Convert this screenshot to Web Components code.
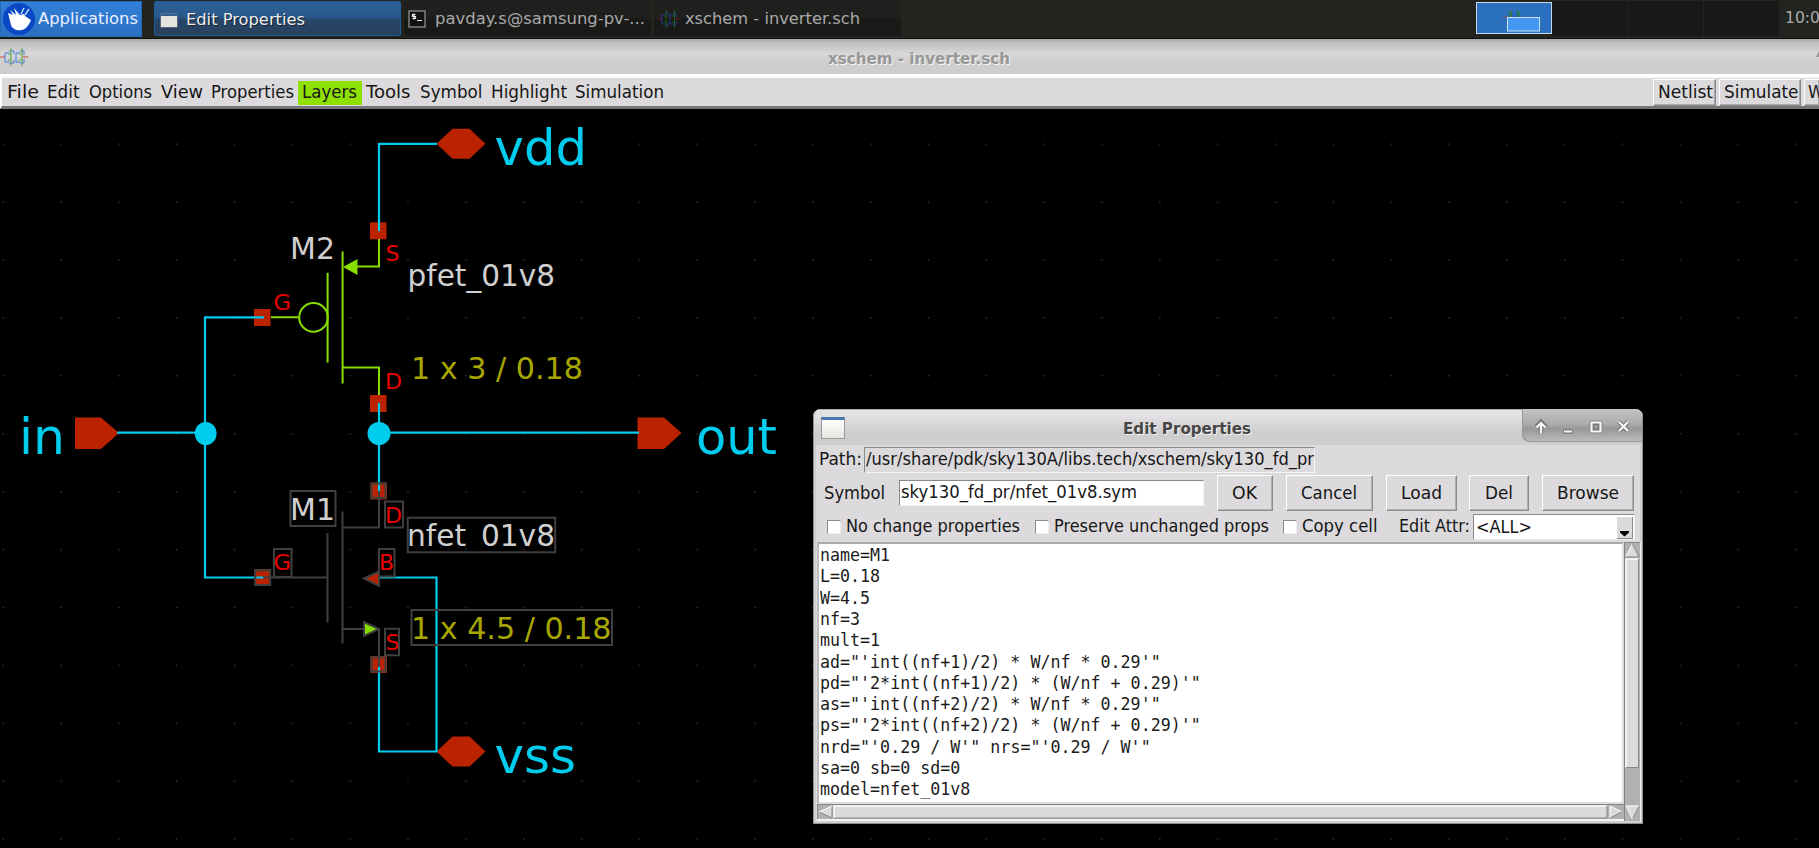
<!DOCTYPE html>
<html lang="en">
<head>
<meta charset="utf-8">
<title>xschem - inverter.sch</title>
<style>
html,body{margin:0;background:#000;overflow:hidden}
body{width:1819px;height:848px;font-family:"DejaVu Sans",sans-serif}
</style>
</head>
<body>
<desk-top></desk-top>
<script>
const define=(name,html,init)=>customElements.define(name,class extends HTMLElement{
  constructor(){super();this.attachShadow({mode:'open'}).innerHTML=html}
  connectedCallback(){if(init)init(this,this.shadowRoot)}
});

/* Text set to an exact advance width. Attributes: gap (space before), w (width). */
customElements.define('fit-text',class extends HTMLElement{
  constructor(){super();this.attachShadow({mode:'open'}).innerHTML=`<style>
    :host{display:block;flex:none;white-space:pre}span{display:inline-block;transform-origin:0 50%}
    </style><span><slot></slot></span>`}
  connectedCallback(){
    const w=+this.getAttribute('w'),s=this.shadowRoot.querySelector('span');
    this.style.marginLeft=(this.getAttribute('gap')||0)+'px';
    this.style.width=w+'px';
    requestAnimationFrame(()=>this.fit(w,s));this.fit(w,s);
  }
  fit(w,s){s.style.transform='none';const n=s.getBoundingClientRect().width;if(n)s.style.transform=`scaleX(${w/n})`}
});

const gates=(r,g,b)=>`<path d="M0 10h5M23 10h5" stroke="${r}"/><path d="M5 10V6h4M5 10v5h4M16 10V6h4M16 10v5h4M9 4h5v3M9 16h5v-3M20 4h4v4M20 16h4v-4" stroke="${b}"/><path d="M11 1v18M22 1v18M8 7h3M8 13h3M19 7h3M19 13h3" stroke="${g}"/>`;

define('task-bar',`<style>
:host{display:flex;flex:none;height:39px;background:#222420;border-bottom:1px solid #111;box-sizing:border-box;color:#a9a9a9;font-size:16.2px;line-height:36px}
.app{display:flex;flex:none;width:142px;height:36px;margin:1px 0 0;background:linear-gradient(#3080d8,#2a70c2);color:#eef;box-shadow:inset 0 0 0 1px #2468b8;line-height:35px}
.app svg{flex:none;margin:1px 0 0 2px}
.task{display:flex;flex:none;height:35px;margin-top:1px}
.on{width:245px;margin-left:12px;background:linear-gradient(#2a6097 0,#2a5788 49%,#28476a 51%,#29405d);border:1px solid #205b99;border-radius:2px;color:#eee;height:33px;text-shadow:1px 1px #123}
.win{width:16px;height:11px;margin:12px 0 0 6px;background:#e4e4df;border-top:2px solid #2c6097;box-shadow:0 0 0 .5px #888}
.off{background:linear-gradient(#1f201e 48%,#191a18 52%);margin-left:3px}
.pager{display:flex;flex:none;height:35px;margin:1px 0 0 575px}
.cell{width:75px;margin-right:1px;background:#181818}
.cell.a{box-sizing:border-box;height:32px;width:76px;margin:1px 0 0;border:1px solid #c9d6e8;background:#2a70be}
</style>
<div class="app"><svg width="34" height="34" viewBox="0 0 34 34"><circle cx="17" cy="17" r="16" fill="#0b46c5"/><path d="M6 11l5 2-3-5 6 5-2-7 6 7 4-1 1 2 6 4c-2 5-5 9-9 10-5 1-10-1-11-5C8 19 7 15 6 11z" fill="#fff"/><path d="M19 12l3-6M23 13l4-6" stroke="#b9ddff" stroke-width="1.4"/></svg><fit-text gap="1.5" w="100">Applications</fit-text></div>
<div class="task on"><div class="win"></div><fit-text gap="9" w="119">Edit Properties</fit-text></div>
<div class="task off" style="width:247px"><svg width="18" height="18" viewBox="0 0 18 18" style="margin:9px 0 0 4px"><rect x="1" y="1" width="16" height="16" fill="#111" stroke="#999" stroke-width="1.2"/><path d="M7.5 4.5h-3v2h3v2h-3M6 3.5v6M9 10.500h5" stroke="#eee" stroke-width="1.2" fill="none"/></svg><fit-text gap="8.5" w="210">pavday.s@samsung-pv-...</fit-text></div>
<div class="task off" style="width:247px"><svg width="21" height="20" viewBox="0 0 28 20" preserveAspectRatio="none" fill="none" style="margin:8px 0 0 4px;opacity:.9">${gates('#8b1818','#207020','#2040a8')}</svg><fit-text gap="6" w="175">xschem - inverter.sch</fit-text></div>
<div class="pager"><div class="cell a"><svg width="74" height="30"><path d="M26 14h5M34 7v7M41 7v7" stroke="#855" /><path d="M33 8v6M41 8v6M32 11h4M39 11h4" stroke="#287b50" stroke-width="2"/><path d="M36 10v4h3v-4" stroke="#2350d8" fill="none"/><rect x="30.500" y="14.500" width="32" height="13.500" fill="#4497f2" stroke="#cfe0f5"/></svg></div><div class="cell"></div><div class="cell"></div><div class="cell"></div></div>
<fit-text gap="4.5" w="35">10:0</fit-text>`);

define('title-bar',`<style>
:host{display:flex;flex:none;height:37px;background:linear-gradient(#a9a9a9 0,#bcbcbc 8%,#d7d7d7 38%,#cecece 65%,#cdcdcd 94%,#fff 96%);color:#979797;font:bold 15.8px/39px "DejaVu Sans",sans-serif;text-shadow:1px 1px #f5f5f5}
svg{flex:none;margin-top:8px}
</style><svg width="28" height="20" fill="none">${gates('#d04040','#5aa445','#4b7be0')}</svg>
<fit-text gap="799.5" w="182">xschem - inverter.sch</fit-text><svg width="4" height="20" style="margin-left:805.5px"><path d="M1 10l3-6v6z" fill="#999"/></svg>`);

define('menu-bar',`<style>
:host{display:flex;flex:none;height:33px;box-sizing:border-box;background:#dcdadc;border-bottom:3px solid #757878;border-top:2px solid #fafafa;border-left:2px solid #fff;color:#161616;font-size:17.3px;line-height:28px;width:1819px;overflow:hidden}
.on{background:#8ee000;height:24px;margin:3px 0 0 4px;width:64px;line-height:22px}
.btn{box-sizing:border-box;height:27px;margin:1px 3px 0 0;border:1px solid;border-color:#fff #8a8a8a #8a8a8a #fff;box-shadow:inset -1px -1px #aaa;line-height:24px;flex:none}
.sp{flex:1}
</style>
<fit-text gap="4.5" w="32">File</fit-text><fit-text gap="8.5" w="32.5">Edit</fit-text><fit-text gap="9" w="63">Options</fit-text><fit-text gap="9" w="42">View</fit-text><fit-text gap="8.500" w="83">Properties</fit-text><div class="on"><fit-text gap="4" w="55">Layers</fit-text></div><fit-text gap="4" w="44.500">Tools</fit-text><fit-text gap="9" w="62.500">Symbol</fit-text><fit-text gap="9" w="76">Highlight</fit-text><fit-text gap="8" w="89">Simulation</fit-text>
<div class="sp"></div>
<div class="btn" style="width:63px"><fit-text gap="3.5" w="55">Netlist</fit-text></div><div class="btn" style="width:82px"><fit-text gap="3.5" w="74.500">Simulate</fit-text></div><div class="btn" style="width:15px;margin:1px 0 0;border-right:0;overflow:hidden"><fit-text gap="3" w="16">W</fit-text></div>`);

const T=(x,y,w,s,c,t)=>`<text x="${x}" y="${y}" font-size="${s}" textLength="${w}" lengthAdjust="spacingAndGlyphs" fill="${c}">${t}</text>`;
const W='#d0d0d0',C='#00ccee',Y='#a7a700',R='#ee0000',P='#bb2200',G='#88dd00',S='#3f3f3f';
const box=(x,y,w,h)=>`<rect x="${x}" y="${y}" width="${w}" height="${h}" fill="none" stroke="${S}" stroke-width="2"/>`;
const sq=(x,y)=>`<rect x="${x}" y="${y}" width="16.500" height="17" fill="${P}"/>`;
const hex=y=>`<path d="M436.500 ${y}L452.500 ${y-15}H469.500L485.500 ${y}L469.500 ${y+15}H452.500Z" fill="${P}"/>`;
define('schematic-canvas',`<style>:host{display:block;flex:1;min-height:0;background:#000}svg{display:block;font-family:"DejaVu Sans",sans-serif}</style>
<svg width="1819" height="739" viewBox="0 109 1819 739">
<defs><pattern id="g" x="2.500" y="143.500" width="57.830" height="57.900" patternUnits="userSpaceOnUse"><rect width="1.400" height="1.400" fill="#3a3a3a"/></pattern></defs>
<rect y="109" width="1819" height="739" fill="url(#g)"/>
${sq(370,222.3)}${sq(254,309)}${sq(370,395)}${sq(370.5,482.500)}${sq(254.500,569)}${sq(370.5,656)}
${hex(143.800)}${hex(751.500)}
<path d="M75 417.500H101L119 433L101 449H75ZM637.500 417.500H664L681.500 433L664 449H637.500Z" fill="${P}"/>
<g fill="none" stroke="${G}" stroke-width="2"><path d="M379 239V266.500H357M342.600 251.500V383.500M327.600 272.700V362.500M271 317.300H299M342.600 367.500H379V395"/><circle cx="313.500" cy="317.400" r="14.300"/></g>
<path d="M343 267L357.500 259V275Z" fill="${G}"/>
${T(290,258.500,45,30.200,W,'M2')}${T(407.500,286,147.500,30.200,W,'pfet_01v8')}${T(411,378.500,172,30.200,Y,'1 x 3 / 0.18')}
${T(385.500,260.700,14,21,R,'S')}${T(385,388.800,17,21,R,'D')}${T(273.500,309.700,17.500,21,R,'G')}
${T(494.500,165.300,92.500,49.600,C,'vdd')}${T(494.500,772.700,81.500,49.600,C,'vss')}${T(19,453.500,46,49.600,C,'in')}${T(696,453.500,81,49.600,C,'out')}
${T(290,519.500,45,30.200,W,'M1')}${T(407,546,148,30.200,W,'nfet_01v8')}${T(411,638.700,200.500,30.200,Y,'1 x 4.5 / 0.18')}
${T(385,522.500,17,21,R,'D')}${T(273.500,569.700,17.500,21,R,'G')}${T(379,569.700,15,21,R,'B')}${T(385.500,649.700,14,21,R,'S')}
<g fill="none" stroke="${C}" stroke-width="2.200"><path d="M437 143.800H379V231M264 317.300H205V577.500H264M117 432.600H205M379 403V491M379 432.600H639M380 577.500H436.500V751.500H379V665"/></g>
<g fill="${C}"><ellipse cx="205.700" cy="433.500" rx="10.900" ry="11.600"/><ellipse cx="379" cy="433.500" rx="11.500" ry="11.600"/></g>
<path d="M364 578.500L379 571.500V586Z" fill="${P}" stroke="${S}" stroke-width="2"/><path d="M379 629L364 622V636Z" fill="${G}" stroke="${S}" stroke-width="2"/>
<path d="M466 550.500H482V556H466Z" fill="#000"/>
${box(371.500,483.500,14,14.500)}${box(255.200,570.300,15,14.700)}${box(371.500,657.500,14,14)}
${box(290.500,491,45,35)}${box(385,501.500,18,26)}${box(407.700,517.700,147.500,34.600)}${box(274,549,17.500,28)}${box(379,549,15.500,27.500)}${box(411.500,610,200.500,35)}${box(385,628.800,14,26.500)}
<path d="M379 491V527.600H342.500M342.500 511.500V643.500M327.500 533V622.500M263 577.500H327.500M342.500 629H364M379 629V667" fill="none" stroke="${S}" stroke-width="2"/>
</svg>`);

define('tk-button',`<style>:host{display:block;flex:none;box-sizing:border-box;height:36px;border:1px solid;border-color:#fff #8c8c8c #8c8c8c #fff;box-shadow:inset -1px -1px #b0b0b0;line-height:34px}</style><slot></slot>`);
define('tk-check',`<style>:host{display:flex;flex:none;align-items:center}i{width:14px;height:14px;box-sizing:border-box;background:#fff;border:1px solid;border-color:#8d8d8d #eee #eee #8d8d8d;margin-right:5px}</style><i></i><slot></slot>`);
define('tk-entry',`<style>:host{display:block;flex:none;box-sizing:border-box;height:26px;line-height:23px;border:1px solid;border-color:#888 #f4f4f4 #f4f4f4 #888;border-top-width:1.500px;background:var(--bg,#fff)}</style><slot></slot>`);
define('window-header',`<style>
:host{display:flex;height:36px;flex:none;background:linear-gradient(#8b8b8b 0,#e6e3e6 4%,#e2dfe2 22%,#cecece 65%,#cecece);border-radius:7px 7px 0 0;color:#464646;font:bold 15.800px/39.500px "DejaVu Sans",sans-serif;text-shadow:1px 1px #f4f4f4}
.i{flex:none;width:22px;height:18px;margin:8px 0 0 6.500px;border:1px solid #999;border-top:3px solid #4a77b0;background:linear-gradient(#fff,#e4e6df);box-sizing:content-box}
.b{margin-left:auto;width:120px;height:33px;background:linear-gradient(#c4c4c4 0,#ababab 45%,#989898 60%,#bdbdbd);border-radius:0 7px 0 8px;box-shadow:inset 1px -1px #999}
</style><div class="i"></div><fit-text gap="278" w="128">Edit Properties</fit-text>
<svg class="b" width="120" height="33" fill="none"><g stroke="#777" stroke-width="4.500"><path d="M19 24V15M14 18L19 13L24 18M41 22.500h10M70 14h8v8h-8ZM97 13l9 9M106 13l-9 9"/></g><g stroke="#fafafa" stroke-width="2.200"><path d="M19 24V14M14.500 18.500L19 14L23.500 18.500M42 22.500h8M69.500 13.500h9v9h-9ZM97 13l9 9M106 13l-9 9"/></g></svg>`);

define('text-editor',`<style>
:host{display:grid;grid-template-columns:807px 17px;grid-template-rows:262px 17px;height:279px;flex:none}
.t{box-sizing:border-box;background:#fff;border:2px solid #aaa;border-left-color:#bbb;border-right:2px solid #ddd;border-bottom:2px solid #ddd;font:17.500px/21.280px "DejaVu Sans Mono",monospace;color:#1b1b1b;padding:1.200px 0 0 1px;overflow:hidden}
svg{display:block}
</style><div class="t"></div>
<svg width="17" height="279" viewBox="0 0 17 279" style="grid-row:1/3;grid-column:2"><rect width="18" height="279" fill="#b2b0b2"/><path d="M.5 279V.5H17" stroke="#858585" fill="none"/><path d="M16.500 0V279" stroke="#eee"/><path d="M1.500 15L8.500 2L15 15Z" fill="#dcdadc"/><path d="M1.500 15L8.500 2" stroke="#fff"/><path d="M8.500 2L15 15H1.500" stroke="#888" fill="none"/><rect x="2" y="17" width="13" height="208" fill="#dcdadc"/><path d="M2 226V17H15" stroke="#fff" stroke-width="1.500" fill="none"/><path d="M14.500 17V225.500H2" stroke="#888" fill="none"/><path d="M2 264H15L8.500 277Z" fill="#dcdadc"/><path d="M15 264L8.500 277" stroke="#888"/><path d="M15 264H2L8.500 277" stroke="#fff" fill="none"/></svg>
<svg width="807" height="17" style="grid-column:1"><rect width="807" height="17" fill="#b2b0b2"/><path d="M0 .5H807M.5 0V17" stroke="#858585"/><path d="M0 16H807" stroke="#f2f2f2" stroke-width="2"/><path d="M2 8L15 2V14Z" fill="#dcdadc"/><path d="M15 2V14L2 8" stroke="#888" fill="none"/><path d="M2 8L15 2" stroke="#fff"/><rect x="17" y="2" width="773" height="12" fill="#dcdadc"/><path d="M17 14V2H790" stroke="#fff" fill="none" stroke-width="1.500"/><path d="M17 14H790V2" stroke="#888" fill="none"/><path d="M793 2L805 8L793 14Z" fill="#dcdadc"/><path d="M793 14V2L805 8" stroke="#fff" fill="none"/><path d="M805 8L793 14" stroke="#888"/></svg>`,(el,root)=>{
  const lines=['name=M1','L=0.18','W=4.5','nf=3','mult=1',`ad="'int((nf+1)/2) * W/nf * 0.29'"`,`pd="'2*int((nf+1)/2) * (W/nf + 0.29)'"`,`as="'int((nf+2)/2) * W/nf * 0.29'"`,`ps="'2*int((nf+2)/2) * (W/nf + 0.29)'"`,`nrd="'0.29 / W'" nrs="'0.29 / W'"`,'sa=0 sb=0 sd=0','model=nfet_01v8'];
  const t=root.querySelector('.t');t.replaceChildren();
  for(const l of lines){const f=document.createElement('fit-text');f.setAttribute('w',l.length*10.02);f.textContent=l;t.append(f)}
});

define('properties-dialog',`<style>
:host{display:flex;flex-direction:column;box-sizing:border-box;width:830px;height:415px;background:#dcdadc;border-radius:8px 8px 0 0;box-shadow:inset 0 0 0 1px #8e8e8e,inset 0 0 0 3px #d0d0d0;color:#161616;font-size:17.300px}
window-header{margin:0 1px}
.r{display:flex;flex:none}
.p{height:29px;padding:2px 0 0 6px;box-sizing:border-box;line-height:24.500px}
.s{height:37px;padding-left:11px;box-sizing:border-box;align-items:center;line-height:36px}
.c{height:31px;padding-left:14px;box-sizing:border-box;line-height:31px}
tk-entry{margin-left:15px}
tk-button{margin-left:13px}
.combo{display:flex;margin:3px 0 0 3px;width:162px;box-sizing:border-box;height:26px;background:#fff;border:1px solid;border-color:#888 #eee #eee #888;line-height:24px}
.combo svg{margin:2px 1px 0 auto}
text-editor{margin-left:4px}
</style>
<window-header></window-header>
<div class="r p"><fit-text w="43">Path:</fit-text><tk-entry style="--bg:#dcdadc;width:451px;margin-left:2px"><fit-text gap="1" w="448">/usr/share/pdk/sky130A/libs.tech/xschem/sky130_fd_pr</fit-text></tk-entry></div>
<div class="r s"><fit-text w="61">Symbol</fit-text><tk-entry style="width:305px;margin-left:14px"><fit-text gap="1" w="236">sky130_fd_pr/nfet_01v8.sym</fit-text></tk-entry>
<tk-button style="width:56px"><fit-text gap="14" w="25">OK</fit-text></tk-button><tk-button style="width:87px"><fit-text gap="14" w="56">Cancel</fit-text></tk-button><tk-button style="width:71px"><fit-text gap="13.500" w="41">Load</fit-text></tk-button><tk-button style="width:60px;margin-left:12px"><fit-text gap="14.500" w="28">Del</fit-text></tk-button><tk-button style="width:92px"><fit-text gap="13.500" w="62">Browse</fit-text></tk-button></div>
<div class="r c"><tk-check><fit-text w="174">No change properties</fit-text></tk-check><tk-check style="margin-left:15px"><fit-text w="215">Preserve unchanged props</fit-text></tk-check><tk-check style="margin-left:14px"><fit-text w="75.500">Copy cell</fit-text></tk-check><fit-text gap="21.500" w="71">Edit Attr:</fit-text><div class="combo"><fit-text gap="1.500" w="56">&lt;ALL&gt;</fit-text><svg width="16" height="22"><rect width="16" height="22" fill="#dcdadc"/><path d="M0 21.500H15.500V0" stroke="#888" fill="none"/><path d="M3 14H12V15.500L7.500 19.500L3 15.500Z" fill="#000"/></svg></div></div>
<text-editor></text-editor>`);

define('desk-top',`<style>
:host{display:flex;flex-direction:column;position:relative;width:1819px;height:848px;overflow:hidden;background:#000}
properties-dialog{position:absolute;left:813px;top:409px}
</style><task-bar></task-bar><title-bar></title-bar><menu-bar></menu-bar><schematic-canvas></schematic-canvas><properties-dialog></properties-dialog>`);
</script>
</body>
</html>
